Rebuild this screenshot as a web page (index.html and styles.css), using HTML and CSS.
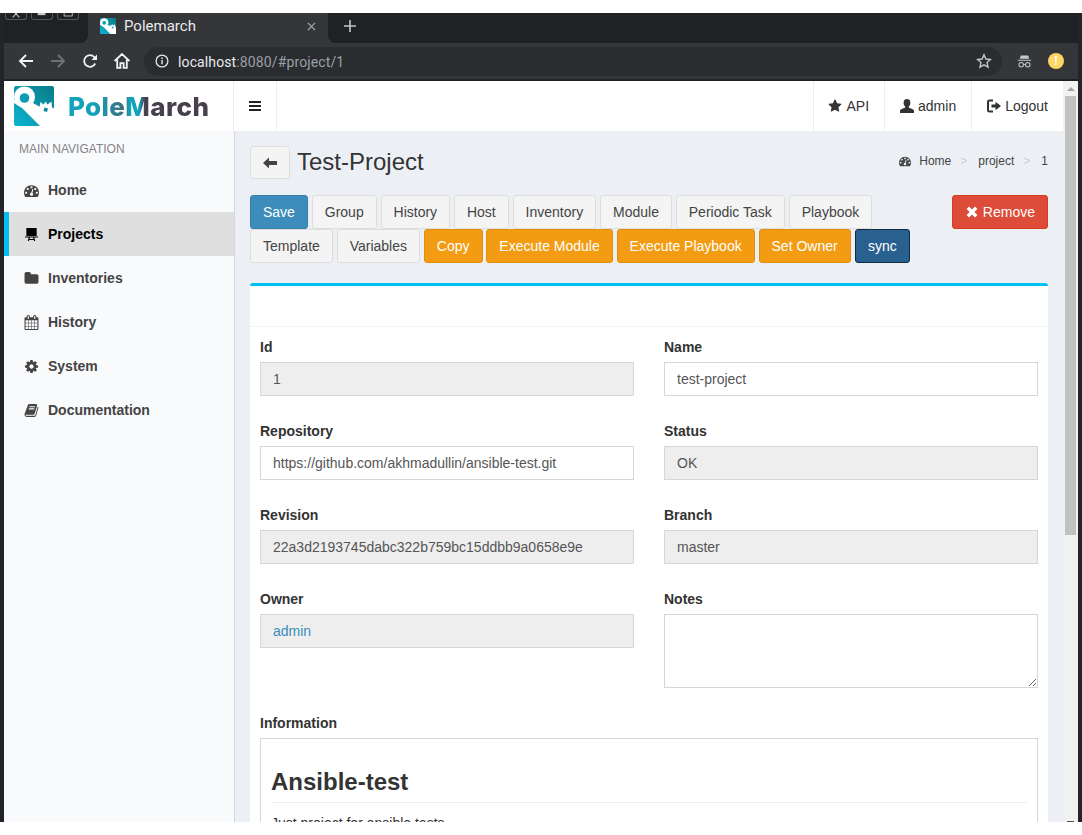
FILE: index.html
```html
<!DOCTYPE html>
<html lang="en">
<head>
    <meta charset="UTF-8">
    <title>Polemarch</title>
    <link rel="stylesheet" href="styles.css">
</head>
<body>
    <svg class="icon-defs" aria-hidden="true">
        <defs>
            <linearGradient id="logoFill" x1="0" y1="1" x2="1" y2="0">
                <stop offset="0" stop-color="#0cb4d2"/>
                <stop offset="1" stop-color="#0b7b86"/>
            </linearGradient>
            <symbol id="key-logo" viewBox="0 0 40 40">
                <rect width="40" height="40" rx="2" fill="url(#logoFill)"/>
                <circle cx="10.500" cy="11" r="10.500" fill="#fff"/>
                <path fill="#fff" d="M0 14l19 3 21 12v11H26L8 22 0 17z"/>
                <circle cx="10.500" cy="12" r="4.800" fill="#0a9db5"/>
                <path fill="#fff" d="M25 23l1.500-7 3 2.500 2-3 2 3 4-3 .5 6 2 1v7h-3z"/>
                <path fill="#0a8c9c" d="M30.500 21.500l3.500 1-1 3.500-3.500-1z"/>
            </symbol>
            <symbol id="i-dashboard" viewBox="0 0 1792 1792">
                <path d="M384 1152q0-53-37.5-90.5t-90.5-37.5-90.5 37.5-37.5 90.5 37.5 90.5 90.5 37.5 90.5-37.5 37.5-90.5zm192-448q0-53-37.5-90.5t-90.5-37.5-90.5 37.5-37.5 90.5 37.5 90.5 90.5 37.5 90.5-37.5 37.5-90.5zm428 481l101-382q6-26-7.5-48.5t-38.5-29.5-48 6.5-30 39.5l-101 382q-60 5-107 43.5t-63 98.5q-20 77 20 146t117 89 146-20 89-117q16-60-6-117t-72-91zm660-33q0-53-37.5-90.5t-90.5-37.5-90.5 37.5-37.5 90.5 37.5 90.5 90.5 37.5 90.5-37.5 37.5-90.5zm-640-640q0-53-37.5-90.5t-90.5-37.5-90.5 37.5-37.5 90.5 37.5 90.5 90.5 37.5 90.5-37.5 37.5-90.5zm448 192q0-53-37.5-90.5t-90.5-37.5-90.5 37.5-37.5 90.5 37.5 90.5 90.5 37.5 90.5-37.5 37.5-90.5zm320 448q0 261-141 483-19 29-54 29h-1402q-35 0-54-29-141-221-141-483 0-182 71-348t191-286 286-191 348-71 348 71 286 191 191 286 71 348z"/>
            </symbol>
            <symbol id="i-folder" viewBox="0 0 1792 1792">
                <path d="M1728 608v704q0 92-66 158t-158 66h-1216q-92 0-158-66t-66-158v-960q0-92 66-158t158-66h320q92 0 158 66t66 158v32h672q92 0 158 66t66 158z"/>
            </symbol>
            <symbol id="i-calendar" viewBox="0 0 1792 1792">
                <path d="M192 1664h288v-288h-288v288zm352 0h320v-288h-320v288zm-352-352h288v-320h-288v320zm352 0h320v-320h-320v320zm-352-384h288v-288h-288v288zm736 736h320v-288h-320v288zm-384-736h320v-288h-320v288zm768 736h288v-288h-288v288zm-384-352h320v-320h-320v320zm-352-864v-288q0-13-9.5-22.5t-22.5-9.5h-64q-13 0-22.5 9.5t-9.5 22.5v288q0 13 9.5 22.5t22.5 9.5h64q13 0 22.5-9.5t9.5-22.5zm736 864h288v-320h-288v320zm-384-384h320v-288h-320v288zm384 0h288v-288h-288v288zm32-480v-288q0-13-9.5-22.5t-22.5-9.5h-64q-13 0-22.5 9.5t-9.5 22.5v288q0 13 9.5 22.5t22.5 9.5h64q13 0 22.5-9.5t9.5-22.5zm384-64v1280q0 52-38 90t-90 38h-1408q-52 0-90-38t-38-90v-1280q0-52 38-90t90-38h128v-96q0-66 47-113t113-47h64q66 0 113 47t47 113v96h384v-96q0-66 47-113t113-47h64q66 0 113 47t47 113v96h128q52 0 90 38t38 90z"/>
            </symbol>
            <symbol id="i-cog" viewBox="0 0 1792 1792">
                <path d="M1152 896q0-106-75-181t-181-75-181 75-75 181 75 181 181 75 181-75 75-181zm512-109v222q0 12-8 23t-20 13l-185 28q-19 54-39 91 35 50 107 138 10 12 10 25t-9 23q-27 37-99 108t-94 71q-12 0-26-9l-138-108q-44 23-91 38-16 136-29 186-7 28-36 28h-222q-14 0-24.5-8.5t-11.5-21.5l-28-184q-49-16-90-37l-141 107q-10 9-25 9-14 0-25-11-126-114-165-168-7-10-7-23 0-12 8-23 15-21 51-66.5t54-70.5q-27-50-41-99l-183-27q-13-2-21-12.5t-8-23.5v-222q0-12 8-23t19-13l186-28q14-46 39-92-40-57-107-138-10-12-10-24 0-10 9-23 26-36 98.5-107.5t94.5-71.5q13 0 26 10l138 107q44-23 91-38 16-136 29-186 7-28 36-28h222q14 0 24.5 8.5t11.5 21.5l28 184q49 16 90 37l142-107q9-9 24-9 13 0 25 10 129 119 165 170 7 8 7 22 0 12-8 23-15 21-51 66.5t-54 70.5q26 50 41 98l183 28q13 2 21 12.5t8 23.5z"/>
            </symbol>
            <symbol id="i-book" viewBox="0 0 1792 1792">
                <path d="M1703 478q40 57 18 129l-275 906q-19 64-76.5 107.5t-122.5 43.5h-923q-77 0-148.5-53.5t-99.5-131.5q-24-67-2-127 0-4 3-27t4-37q1-8-3-21.5t-3-19.5q2-11 8-21t16.5-23.5 16.5-23.5q23-38 45-91.5t30-91.5q3-10 .5-30t-.5-28q3-11 17-28t17-23q21-36 42-92t25-90q1-9-2.5-32t.5-28q4-13 22-30.5t22-22.5q19-26 42.5-84.5t27.5-96.5q1-8-3-25.5t-2-26.5q2-8 9-18t18-23 17-21q8-12 16.5-30.5t15-35 16-36 19.5-32 26.5-23.5 36-11.5 47.5 5.5l-1 3q38-9 51-9h761q74 0 114 56t18 130l-274 906q-36 119-71.5 153.5t-128.5 34.5h-869q-27 0-38 15-11 16-1 43 24 70 144 70h923q29 0 56-15.5t35-41.5l300-987q7-22 5-57 38 15 59 43zm-1064 2q-4 13 2 22.5t20 9.5h608q13 0 25.5-9.5t16.5-22.5l21-64q4-13-2-22.5t-20-9.5h-608q-13 0-25.5 9.5t-16.5 22.5zm-83 256q-4 13 2 22.5t20 9.5h608q13 0 25.5-9.5t16.5-22.5l21-64q4-13-2-22.5t-20-9.5h-608q-13 0-25.5 9.5t-16.5 22.5z"/>
            </symbol>
            <symbol id="i-star" viewBox="0 0 1792 1792">
                <path d="M1728 647q0 22-26 48l-363 354 86 500q1 7 1 20 0 21-10.5 35.5t-30.5 14.5q-19 0-40-12l-449-236-449 236q-22 12-40 12-21 0-31.5-14.5t-10.5-35.5q0-6 2-20l86-500-364-354q-25-27-25-48 0-37 56-46l502-73 225-455q19-41 49-41t49 41l225 455 502 73q56 9 56 46z"/>
            </symbol>
        </defs>
    </svg>

    <div class="window">
        <!-- Browser chrome -->
        <div class="tabstrip">
            <div class="win-controls">
                <span class="win-btn"><svg viewBox="0 0 22 7"><path d="M7 -3l8 8M15 -3l-8 8" stroke="#c8c8c8" stroke-width="1.200" fill="none"/></svg></span>
                <span class="win-btn"><svg viewBox="0 0 22 7"><path d="M6 0h9v2.500H6z" fill="#c8c8c8"/></svg></span>
                <span class="win-btn"><svg viewBox="0 0 22 7"><path d="M6.500 0v3.500h9.500V0" stroke="#c8c8c8" fill="none"/></svg></span>
            </div>
            <div class="tab">
                <svg class="tab-favicon"><use href="#key-logo"/></svg>
                <span class="tab-title">Polemarch</span>
                <svg class="tab-close" viewBox="0 0 10 10"><path d="M1 1l8 8M9 1l-8 8" stroke="#a5a8ac" stroke-width="1.400"/></svg>
            </div>
            <div class="tab-rest">
                <svg class="tab-new" viewBox="0 0 12 12"><path d="M6 0v12M0 6h12" stroke="#c4c7c9" stroke-width="1.600"/></svg>
            </div>
        </div>
        <div class="toolbar">
            <svg class="tool-icon" viewBox="0 0 16 16"><path d="M15 8H2M8 2L2 8l6 6" stroke="#f1f3f4" stroke-width="1.900" fill="none"/></svg>
            <svg class="tool-icon" viewBox="0 0 16 16"><path d="M1 8h13M8 2l6 6-6 6" stroke="#6e7073" stroke-width="1.900" fill="none"/></svg>
            <svg class="tool-icon" viewBox="0 0 16 16"><path d="M13.200 10.500A5.800 5.800 0 1 1 12.200 4L14 6" stroke="#f1f3f4" stroke-width="1.800" fill="none"/><path d="M15 1.500V7H9.500z" fill="#f1f3f4"/></svg>
            <svg class="tool-icon" viewBox="0.500 1 15 15"><path d="M1 8.500l7-6.500 7 6.500M3.500 7v8h3v-4.500h3V15h3V7" stroke="#f1f3f4" stroke-width="1.700" fill="none"/></svg>
            <div class="omnibox">
                <svg class="omni-info" viewBox="0 0 14 14"><circle cx="7" cy="7" r="5.900" stroke="#e8eaed" stroke-width="1.300" fill="none"/><path d="M6.300 6h1.400v4.200H6.300zM6.300 3.600h1.400V5H6.300z" fill="#e8eaed"/></svg>
                <span class="omni-url">localhost<span class="omni-dim">:8080/#project/1</span></span>
                <svg class="omni-star" viewBox="0 0 16 16"><path d="M8 1.800l1.900 4.200 4.600.5-3.400 3.100.9 4.500-4-2.300-4 2.300.9-4.500-3.400-3.100 4.600-.5z" stroke="#c4c7c9" stroke-width="1.400" fill="none"/></svg>
            </div>
            <svg class="incognito" viewBox="0 0 16 16"><path d="M4 1.500h8l1 3.500H3zM1 6h14v1.200H1z" fill="#c4c7c9"/><circle cx="4.500" cy="11.500" r="2.400" stroke="#c4c7c9" stroke-width="1.100" fill="none"/><circle cx="11.500" cy="11.500" r="2.400" stroke="#c4c7c9" stroke-width="1.100" fill="none"/><path d="M7 11.200h2" stroke="#c4c7c9"/></svg>
            <span class="profile-badge">!</span>
        </div>

        <div class="viewport">
            <div class="page">
                <!-- Top navbar -->
                <header class="navbar">
                    <a class="logo">
                        <svg class="logo-key"><use href="#key-logo"/></svg>
                        <span class="logo-text">PoleMarch</span>
                    </a>
                    <a class="nav-toggle">
                        <svg viewBox="0 0 12 10" width="12" height="10"><path d="M0 0h12v2H0zM0 4h12v2H0zM0 8h12v2H0z" fill="#222"/></svg>
                    </a>
                    <nav class="nav-right">
                        <a class="nav-item nav-api"><svg class="icon"><use href="#i-star"/></svg>API</a>
                        <a class="nav-item"><svg class="icon" viewBox="0 0 14 14"><path d="M7 0c2.200 0 3.400 1.600 3.400 3.700 0 1.500-.7 3.200-1.700 4 0 .8.500 1.200 1.700 1.600 1.800.6 3.300 1.200 3.600 2.400V14H0v-2.300c.3-1.200 1.800-1.800 3.600-2.400 1.200-.4 1.700-.8 1.700-1.600-1-.8-1.700-2.500-1.700-4C3.600 1.600 4.800 0 7 0z"/></svg>admin</a>
                        <a class="nav-item"><svg class="icon" viewBox="0 0 14 14"><path d="M6 1.500H2.500Q1 1.500 1 3v8q0 1.500 1.500 1.500H6" stroke="currentColor" stroke-width="2" fill="none"/><path d="M4.500 5.500H8.500V2.800L14 7l-5.500 4.200V8.500H4.500z"/></svg>Logout</a>
                    </nav>
                </header>

                <div class="layout">
                    <!-- Sidebar -->
                    <aside class="sidebar">
                        <div class="sidebar-header">MAIN NAVIGATION</div>
                        <ul class="sidebar-menu">
                            <li><a><svg class="icon"><use href="#i-dashboard"/></svg>Home</a></li>
                            <li class="active"><a>
                                <svg class="icon" viewBox="-1 -1 16 16"><path d="M1.500 0h11v8.500h-11zM0 9h14v1.200H0zM4 10.200h1.300L4.300 14H3zM8.700 10.200H10l1 3.800H9.700zM3.500 11.800h7v1h-7z"/></svg>Projects</a></li>
                            <li><a><svg class="icon"><use href="#i-folder"/></svg>Inventories</a></li>
                            <li><a><svg class="icon"><use href="#i-calendar"/></svg>History</a></li>
                            <li><a><svg class="icon"><use href="#i-cog"/></svg>System</a></li>
                            <li><a><svg class="icon"><use href="#i-book"/></svg>Documentation</a></li>
                        </ul>
                    </aside>

                    <!-- Main content -->
                    <main class="content">
                        <div class="content-header">
                            <button class="btn btn-back" type="button">
                                <svg viewBox="0 0 14 12" width="14" height="12"><path d="M6 0.500v3.500h8v4H6v3.500L0 6z" fill="#444"/></svg>
                            </button>
                            <h1>Test-Project</h1>
                            <ol class="breadcrumb">
                                <li><svg class="icon"><use href="#i-dashboard"/></svg>Home</li>
                                <li class="sep">&gt;</li>
                                <li>project</li>
                                <li class="sep">&gt;</li>
                                <li>1</li>
                            </ol>
                        </div>

                        <div class="actions">
                            <div class="actions-left">
                                <button class="btn btn-primary" type="button">Save</button>
                                <button class="btn" type="button">Group</button>
                                <button class="btn" type="button">History</button>
                                <button class="btn" type="button">Host</button>
                                <button class="btn" type="button">Inventory</button>
                                <button class="btn" type="button">Module</button>
                                <button class="btn" type="button">Periodic Task</button>
                                <button class="btn" type="button">Playbook</button>
                                <button class="btn" type="button">Template</button>
                                <button class="btn" type="button">Variables</button>
                                <button class="btn btn-warning" type="button">Copy</button>
                                <button class="btn btn-warning" type="button">Execute Module</button>
                                <button class="btn btn-warning" type="button">Execute Playbook</button>
                                <button class="btn btn-warning" type="button">Set Owner</button>
                                <button class="btn btn-sync" type="button">sync</button>
                            </div>
                            <button class="btn btn-danger" type="button">
                                <svg viewBox="-1 -1 14 14" width="14" height="14"><path d="M3 .6L6 3.600 9 .6 11.400 3 8.400 6l3 3L9 11.400l-3-3-3 3L.6 9l3-3-3-3z" fill="#fff"/></svg>Remove</button>
                        </div>

                        <section class="box">
                            <div class="box-header"></div>
                            <form class="box-body">
                                <div class="form-group">
                                    <label>Id</label>
                                    <input type="text" value="1" readonly>
                                </div>
                                <div class="form-group">
                                    <label>Name</label>
                                    <input type="text" value="test-project">
                                </div>
                                <div class="form-group">
                                    <label>Repository</label>
                                    <input type="text" value="https://github.com/akhmadullin/ansible-test.git">
                                </div>
                                <div class="form-group">
                                    <label>Status</label>
                                    <input type="text" value="OK" readonly>
                                </div>
                                <div class="form-group">
                                    <label>Revision</label>
                                    <input type="text" value="22a3d2193745dabc322b759bc15ddbb9a0658e9e" readonly>
                                </div>
                                <div class="form-group">
                                    <label>Branch</label>
                                    <input type="text" value="master" readonly>
                                </div>
                                <div class="form-group">
                                    <label>Owner</label>
                                    <div class="field-link"><a>admin</a></div>
                                </div>
                                <div class="form-group">
                                    <label>Notes</label>
                                    <textarea></textarea>
                                </div>
                                <div class="form-group form-wide">
                                    <label>Information</label>
                                    <div class="readme">
                                        <h2>Ansible-test</h2>
                                        <p>Just project for ansible tests</p>
                                    </div>
                                </div>
                            </form>
                        </section>
                    </main>
                </div>
            </div>

            <div class="scrollbar">
                <span class="scroll-up"></span>
                <span class="scroll-thumb"></span>
                <span class="scroll-down"></span>
            </div>
        </div>
    </div>
</body>
</html>
```

FILE: styles.css
```css
html, body {
    margin: 0;
    padding: 0;
    height: 100%;
    background-color: #fff;
    overflow: hidden;
}

body {
    font-family: "Liberation Sans", Arial, sans-serif;
    font-size: 14px;
    color: #333;
}

.icon-defs {
    position: absolute;
    width: 0;
    height: 0;
}

.icon {
    width: 14px;
    height: 14px;
    fill: currentColor;
    flex: none;
}

a {
    color: inherit;
    text-decoration: none;
}

/* Browser window */
.window {
    margin-top: 13px;
    height: 809px;
    padding: 0 4px;
    display: flex;
    flex-direction: column;
    background-color: #232427;
    overflow: hidden;
}

.tabstrip {
    display: flex;
    height: 30px;
    flex: none;
    background-color: #35363a;
}

.win-controls {
    width: 84px;
    display: flex;
    gap: 4px;
    padding-left: 1px;
    box-sizing: border-box;
    align-items: flex-start;
    background-color: #202124;
    border-bottom-right-radius: 8px;
}

.win-btn {
    width: 22px;
    height: 7px;
    border: 1px solid #55575a;
    border-top: 0;
    border-radius: 0 0 3px 3px;
    box-sizing: border-box;
    display: flex;
}

.win-btn svg {
    width: 100%;
    height: 100%;
}

.tab {
    width: 240px;
    display: flex;
    align-items: center;
    padding: 0 12px 4px;
    box-sizing: border-box;
    color: #e8eaed;
    font-family: Roboto, sans-serif;
    font-size: 15px;
}

.tab-favicon {
    width: 16px;
    height: 16px;
    margin-right: 8px;
}

.tab-title {
    flex: 1;
}

.tab-close {
    width: 9px;
    height: 9px;
}

.tab-rest {
    flex: 1;
    display: flex;
    align-items: center;
    padding: 0 0 4px 16px;
    background-color: #202124;
    border-bottom-left-radius: 8px;
}

.tab-new {
    width: 12px;
    height: 12px;
}

.toolbar {
    display: flex;
    align-items: center;
    height: 36px;
    flex: none;
    padding-left: 14px;
    background-color: #35363a;
    border-bottom: 2px solid #202124;
}

.tool-icon {
    width: 16px;
    height: 16px;
    margin-right: 16px;
}

.omnibox {
    width: 858px;
    height: 29px;
    margin-left: -2px;
    display: flex;
    align-items: center;
    box-sizing: border-box;
    padding: 0 10px 0 11px;
    border-radius: 15px;
    background-color: #2a2c2f;
    color: #e8eaed;
    font-family: Roboto, sans-serif;
    font-size: 14px;
}

.omni-info {
    width: 14px;
    height: 14px;
    margin-right: 9px;
}

.omni-url {
    flex: 1;
    padding-top: 1px;
    letter-spacing: 0.12px;
}

.omni-dim {
    color: #9aa0a6;
}

.omni-star {
    width: 16px;
    height: 16px;
}

.incognito {
    width: 15px;
    height: 15px;
    margin-left: 15px;
}

.profile-badge {
    width: 16px;
    height: 16px;
    margin-left: 16px;
    border-radius: 50%;
    background-color: #fdd663;
    color: #fff;
    font-size: 12px;
    font-weight: bold;
    line-height: 16px;
    text-align: center;
}

/* Page inside the browser */
.viewport {
    flex: 1;
    display: flex;
    min-height: 0;
}

.page {
    flex: 1;
    min-width: 0;
    display: flex;
    flex-direction: column;
    background-color: #ecf0f5;
}

.navbar {
    height: 50px;
    flex: none;
    display: flex;
    background-color: #fff;
    color: #333;
}

.logo {
    width: 230px;
    display: flex;
    align-items: center;
    padding-left: 10px;
    box-sizing: border-box;
    border-right: 1px solid #eee;
}

.logo-key {
    width: 40px;
    height: 40px;
    margin-right: 14px;
}

.logo-text {
    font-family: Inter, sans-serif;
    font-weight: 800;
    font-size: 26px;
    letter-spacing: 0.4px;
    color: #47404c;
    background: linear-gradient(90deg, #12a3ba 0, #12a3ba 26px, #3f6b7a 57px, #12a3ba 61px, #12a3ba 71px, #47404c 77px);
    -webkit-background-clip: text;
    background-clip: text;
    -webkit-text-fill-color: transparent;
}

.nav-toggle {
    width: 43px;
    display: flex;
    align-items: center;
    justify-content: center;
    box-sizing: border-box;
    border-right: 1px solid #eee;
}

.nav-right {
    margin-left: auto;
    display: flex;
}

.nav-item {
    display: flex;
    align-items: center;
    gap: 4px;
    padding: 0 15px;
    border-left: 1px solid #eee;
}

.nav-api {
    padding-left: 14px;
}

/* Sidebar */
.layout {
    flex: 1;
    display: flex;
    min-height: 0;
}

.sidebar {
    width: 231px;
    flex: none;
    box-sizing: border-box;
    background-color: #f9fafc;
    border-right: 1px solid #d2d6de;
}

.sidebar-header {
    padding: 11px 15px 11px;
    font-size: 12px;
    line-height: 15px;
    color: #848484;
}

.sidebar-menu {
    list-style: none;
    margin: 0;
    padding: 0;
}

.sidebar-menu a {
    height: 44px;
    display: flex;
    align-items: center;
    gap: 9px;
    padding-left: 20px;
    font-weight: bold;
    color: #444;
}

.sidebar-menu .icon {
    width: 15px;
    height: 15px;
}

.sidebar-menu .active a {
    padding-left: 15px;
    border-left: 5px solid #00c0ef;
    background-color: #dfdfdf;
    color: #000;
}

/* Content */
.content {
    flex: 1;
    min-width: 0;
    padding: 15px;
    overflow: hidden;
}

.content-header {
    display: flex;
    align-items: center;
    height: 33px;
    margin-bottom: 16px;
}

.content-header h1 {
    margin: 0 0 2px 7px;
    font-size: 24px;
    font-weight: normal;
    color: #333;
}

.breadcrumb {
    list-style: none;
    margin: 0 0 4px auto;
    padding: 0;
    display: flex;
    align-items: center;
    font-size: 12px;
    color: #444;
}

.breadcrumb li {
    display: flex;
    align-items: center;
    gap: 8px;
}

.breadcrumb .icon {
    width: 12px;
    height: 12px;
}

.breadcrumb .sep {
    margin: 0 11px 0 9px;
    color: #ccc;
}

.btn {
    height: 34px;
    padding: 0 12px;
    font-family: inherit;
    font-size: 14px;
    color: #444;
    background-color: #f4f4f4;
    border: 1px solid #ddd;
    border-radius: 3px;
    box-sizing: border-box;
    white-space: nowrap;
}

.btn-back {
    width: 40px;
    height: 33px;
    padding: 0;
    display: flex;
    align-items: center;
    justify-content: center;
}

.btn-primary {
    background-color: #3c8dbc;
    border-color: #367fa9;
    color: #fff;
}

.btn-warning {
    background-color: #f39c12;
    border-color: #e08e0b;
    color: #fff;
}

.btn-sync {
    padding: 0 12.5px;
    background-color: #286090;
    border-color: #122b40;
    color: #fff;
}

.btn-danger {
    display: flex;
    align-items: center;
    gap: 4px;
    background-color: #dd4b39;
    border-color: #d73925;
    color: #fff;
}

.actions {
    display: flex;
    justify-content: space-between;
    align-items: flex-start;
    margin-bottom: 20px;
}

.actions-left {
    width: 698px;
    display: flex;
    flex-wrap: wrap;
    column-gap: 3.85px;
}

/* Form box */
.box {
    background-color: #fff;
    border-top: 3px solid #00c0ef;
    border-radius: 3px;
}

.box-header {
    height: 40px;
    border-bottom: 1px solid #f4f4f4;
}

.box-body {
    padding: 10px;
    display: grid;
    grid-template-columns: 1fr 1fr;
    column-gap: 30px;
}

.form-group {
    margin-bottom: 25px;
    min-width: 0;
}

.form-wide {
    grid-column: 1 / 3;
}

label {
    display: block;
    margin-bottom: 5px;
    font-weight: bold;
    line-height: 20px;
}

input, textarea, .field-link {
    display: block;
    width: 100%;
    height: 34px;
    padding: 6px 12px;
    margin: 0;
    box-sizing: border-box;
    font-family: inherit;
    font-size: 14px;
    line-height: 20px;
    color: #555;
    background-color: #fff;
    border: 1px solid #d2d6de;
    border-radius: 0;
    outline: none;
}

input[readonly], .field-link {
    background-color: #eee;
}

.field-link a {
    color: #3c8dbc;
}

textarea {
    height: 74px;
}

.readme {
    border: 1px solid #d2d6de;
    padding: 10px;
    color: #333;
}

.readme h2 {
    margin: 20px 0 10px;
    padding-bottom: 7px;
    font-size: 24px;
    line-height: 26px;
    border-bottom: 1px solid #eee;
}

.readme p {
    margin: 0;
    line-height: 20px;
}

/* Fake page scrollbar */
.scrollbar {
    width: 15px;
    flex: none;
    background-color: #f1f1f1;
    display: flex;
    flex-direction: column;
    align-items: center;
}

.scroll-up {
    width: 0;
    height: 0;
    margin-top: 6px;
    border-left: 4px solid transparent;
    border-right: 4px solid transparent;
    border-bottom: 4px solid #a3a3a3;
}

.scroll-thumb {
    width: 11px;
    height: 439px;
    margin-top: 5px;
    margin-right: 1px;
    background-color: #c1c1c1;
}

.scroll-down {
    width: 7px;
    height: 1px;
    margin-top: auto;
    background-color: #505050;
}
```
